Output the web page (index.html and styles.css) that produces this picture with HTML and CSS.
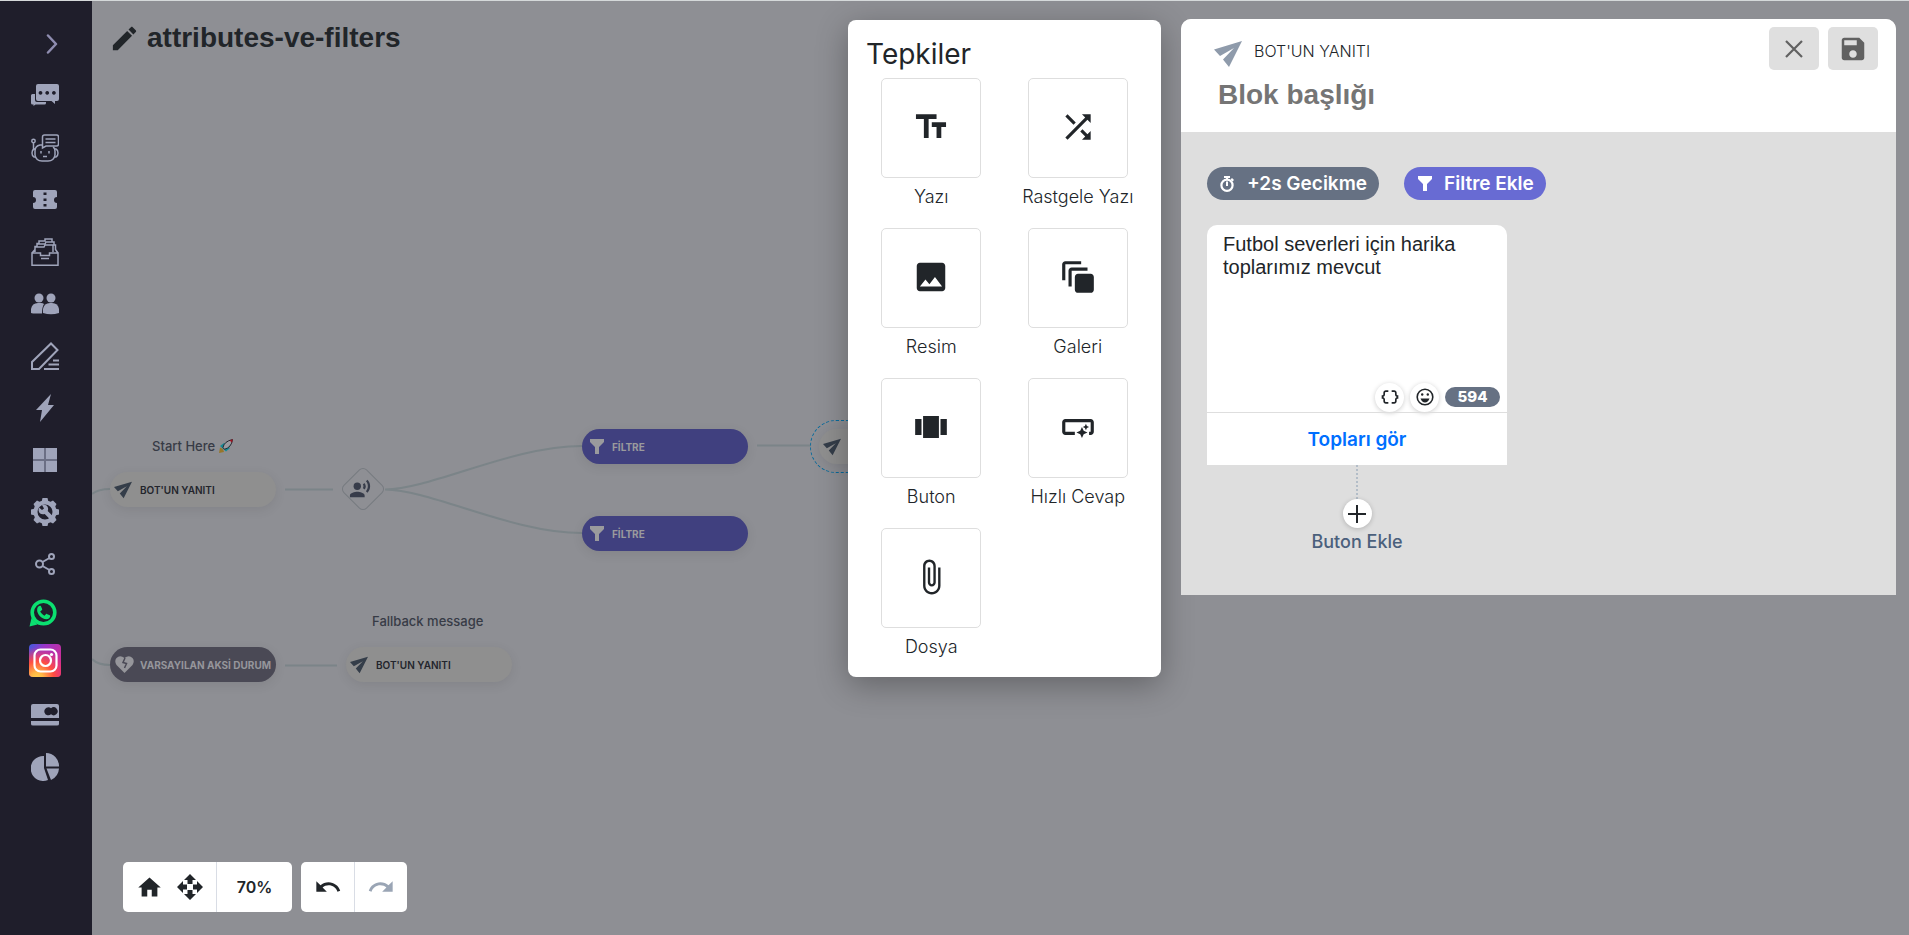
FILE: index.html
```
<!DOCTYPE html>
<html lang="tr">
	<head>
		<meta charset="UTF-8" />
		<meta name="viewport" content="width=device-width, initial-scale=1" />
		<title>attributes-ve-filters</title>
		<link rel="stylesheet" href="styles.css">
	</head>
	<body>
		<!-- shared icons -->
		<svg class="sprite" aria-hidden="true">
			<symbol id="plane" viewBox="0 0 28 26">
				<path d="M0 8.500L28 0 15 26 9 18.500 20 7 6 15z" />
			</symbol>
			<symbol id="funnel" viewBox="0 0 14 15">
				<path d="M0 0h14v3L9 8v7H5V8L0 3z" />
			</symbol>
		</svg>

		<nav class="sidebar" aria-label="Menü">
			<a href="#" class="toggle" aria-label="Genişlet">
				<svg width="12" height="20" viewBox="0 0 12 20"><path d="M2 1.500l8 8.500-8 8.500" fill="none" stroke="#8f8db0" stroke-width="2.500" stroke-linecap="round" stroke-linejoin="round" /></svg>
			</a>
			<a href="#" aria-label="Sohbetler">
				<svg width="28" height="28" viewBox="0 0 28 28">
					<path d="M0 13.500q0-1.500 1.500-1.500H4v6q0 2 2 2h9v1q0 1.500-1.500 1.500H4.500L2.500 24v-1.500H1.500Q0 22.500 0 21z" />
					<path fill-rule="evenodd" d="M7 2h19q2 0 2 2v13q0 2-2 2h-2v3l-3.500-3H7q-2 0-2-2V4q0-2 2-2zm2.500 7a1.900 1.900 0 1 0 .01 0zm6.700 0a1.900 1.900 0 1 0 .01 0zm6.700 0a1.900 1.900 0 1 0 .01 0z" />
				</svg>
			</a>
			<a href="#" aria-label="Botlar">
				<svg class="line" width="28" height="28" viewBox="0 0 28 28" stroke-width="1.500">
					<circle cx="2.500" cy="7" r="1.700" />
					<path d="M2.500 9v7M11 11H9q-5 1-5 6v4q1 6 7 6h6q6 0 7-6v-4q0-3-2-4" />
					<path d="M4 15H3q-2 1-2 4t2 4h2M24 15h1q2 1 2 4t-2 4h-2M11.500 14V3q0-2 2-2h12q2 0 2 2v7q0 2-2 2H15zM14.500 5h10M14.500 8.500h10M10 17v2.500M18 17v2.500M12 22.500h4" />
				</svg>
			</a>
			<a href="#" aria-label="Biletler">
				<svg width="24" height="20" viewBox="0 0 24 20">
					<path fill-rule="evenodd" d="M2 0h20q2 0 2 2v5a3 3 0 0 0 0 6v4q0 2-2 2H2q-2 0-2-2v-4a3 3 0 0 0 0-6V2q0-2 2-2zm8.500 2.500V5h3V2.500zm0 6V11h3V8.500zm0 5.500v2.500h3V14z" />
				</svg>
			</a>
			<a href="#" aria-label="Arşiv">
				<svg class="line" width="28" height="28" viewBox="0 0 28 28" stroke-width="1.500">
					<path d="M1 15h8.500v2.500h9V15H27v12.200H1zM1 15l3-3.500V8.500h2V5.500h2V3h6V1h7v3h2v3h1.500v4.500L27 15M4 14V9h9l1-2h8v7M6 6h8l1-2h6M10 20.500h8" />
				</svg>
			</a>
			<a href="#" aria-label="Kişiler">
				<svg width="28" height="22" viewBox="0 0 28 22">
					<circle cx="8" cy="5" r="4.500" /><circle cx="20" cy="5" r="4.500" />
					<path d="M0 20v-4q1-6 7-6h3q2 0 3 1-2 3-2 9.500H2z" />
					<path d="M12 20v-4q1-6 7-6h2q6 0 7 6v4q-8 2.500-16 0z" />
				</svg>
			</a>
			<a href="#" aria-label="Düzenle">
				<svg class="line" width="28" height="28" viewBox="0 0 28 28" stroke-width="2">
					<path d="M1 27v-7L20 1.500 26.500 8 8 27zM22 18.500h6M17.500 22.500H28M13 27h15" />
				</svg>
			</a>
			<a href="#" aria-label="Otomasyon">
				<svg width="18" height="28" viewBox="0 0 18 28"><path d="M15 0L0 16h6L4 28 18 11h-6z" /></svg>
			</a>
			<a href="#" aria-label="Uygulamalar">
				<svg width="24" height="24" viewBox="0 0 24 24"><path fill="#6b6f85" d="M0 0h24v24H0z" /><path d="M0 0h11v11H0zM13 0h11v11H13zM0 13h11v11H0zM13 13h11v11H13z" /></svg>
			</a>
			<a href="#" aria-label="Ayarlar">
				<svg width="28" height="28" viewBox="0 0 28 28">
					<circle cx="14" cy="14" r="9.500" fill="none" stroke="#9fa4ba" stroke-width="4" />
					<path d="M11.500 0h5l1 4h-7zM11.500 28h5l1-4h-7zM0 11.500v5l4 1v-7zM28 11.500v5l-4 1v-7zM2.500 6l3.500-3.500 4 2L4.500 10zM25.500 6L22 2.500l-4 2 5.500 5.500zM2.500 22L6 25.500l4-2L4.500 18zM25.500 22L22 25.500l-4-2 5.500-5.500z" />
					<path d="M8 9.500l3 2.500 2-1.500-2-3.500q5-1 6 3 .3 1.500-.3 3l5 5-3 3-5-5q-5 1-6-3-.3-2 .300-3.500z" />
				</svg>
			</a>
			<a href="#" aria-label="Paylaş">
				<svg class="line" width="20" height="22" viewBox="0 0 20 22" stroke-width="2">
					<circle cx="4.500" cy="11" r="3.500" /><circle cx="16.500" cy="3.500" r="2.500" /><circle cx="16.500" cy="18.500" r="2.500" />
					<path d="M7.500 9l7-4M7.500 13l7 4" />
				</svg>
			</a>
			<a href="#" class="whatsapp" aria-label="WhatsApp">
				<svg width="28" height="28" viewBox="0 0 28 28">
					<circle cx="14.500" cy="13.500" r="11.300" fill="none" stroke="#0be070" stroke-width="3.600" />
					<path fill="#0be070" d="M.5 27.500l2-8.500 6 6.500z" />
					<path fill="#0be070" transform="translate(5.500 4.500) scale(.75)" d="M7.600 10.800c1.400 2.500 3 4 5.600 5.600l2-2.200c.4-.4.8-.5 1.200-.3l4 1.900c.5.300.7.700.6 1.200-.5 2.500-2.500 4-5 4C9 20.500 3 14 3.500 8c.2-2.500 1.500-4.500 3.500-5 .6-.1 1.300-.1 1.600.5l1.600 3.800c.2.500.1.900-.2 1.200z" />
				</svg>
			</a>
			<a href="#" class="instagram" aria-label="Instagram">
				<svg width="32" height="33" viewBox="0 0 32 33">
					<defs>
						<linearGradient id="ig-sky" x1="0" y1="0" x2="1" y2="0.700">
							<stop offset="0" stop-color="#3b5de0" /><stop offset=".35" stop-color="#9a35c8" /><stop offset="1" stop-color="#d82c8c" />
						</linearGradient>
						<radialGradient id="ig-sun" cx=".25" cy="1.050" r=".95">
							<stop offset="0" stop-color="#ffd34e" /><stop offset=".2" stop-color="#ffb946" /><stop offset=".55" stop-color="#ff4f3f" /><stop offset="1" stop-color="#ff3f60" stop-opacity="0" />
						</radialGradient>
					</defs>
					<rect width="32" height="33" rx="4" fill="url(#ig-sky)" /><rect width="32" height="33" rx="4" fill="url(#ig-sun)" />
					<g fill="none" stroke="#fff" stroke-width="2.200"><rect x="5.500" y="5.500" width="22" height="22" rx="6" /><circle cx="16.500" cy="16.500" r="5.500" /></g>
					<circle cx="22.500" cy="10.500" r="1.600" fill="#fff" />
				</svg>
			</a>
			<a href="#" aria-label="Ödemeler">
				<svg width="28" height="22" viewBox="0 0 28 22">
					<path fill-rule="evenodd" d="M2 0h24q2 0 2 2v12H0V2Q0 0 2 0zm15.500 3.300a4 4 0 1 0 2.500 7 4 4 0 1 0 0-6.100 4 4 0 0 0-2.500-.9z" />
					<path d="M0 17h28v3q0 1.500-2 1.500H2q-2 0-2-1.500z" />
				</svg>
			</a>
			<a href="#" aria-label="Raporlar">
				<svg width="28" height="28" viewBox="0 0 28 28">
					<path d="M13 3v12l4 12A12.500 12.500 0 1 1 13 3zM15 0a13 13 0 0 1 13 13.500H15zM15.500 15.500H28q-.5 8-8 11.500z" />
				</svg>
			</a>
		</nav>

		<main class="canvas">
			<header class="flow-title">
				<svg width="31" height="31" viewBox="0 0 24 24"><path d="M3 17.250V21h3.750L17.810 9.940l-3.750-3.750L3 17.250zM20.710 7.040c.39-.39.39-1.020 0-1.410l-2.340-2.340c-.39-.39-1.020-.39-1.410 0l-1.830 1.830 3.750 3.750 1.830-1.830z" /></svg>
				<h1>attributes-ve-filters</h1>
			</header>

			<!-- flow diagram -->
			<section class="flow">
				<svg class="edges" width="900" height="700">
					<path d="M0 493q6-5 18-5M0 658q6 6 18 6M193 488.500h48M193 664.500h52M293 488.500C340 488 420 445 490 445M293 488.500C340 489 420 532 490 532M665 444.500h54" />
				</svg>

				<p class="caption at-start-caption">Start Here
					<svg width="14" height="14" viewBox="0 0 14 14">
						<path fill="#96762a" d="M1 8.500L4 10l1 3-5 1z" />
						<path fill="#128a94" d="M1 7l4-3 6 5-4 3.500z" />
						<path fill="#9b9ba0" stroke="#252a33" d="M4 8.500q1-6 9.500-8-1 8-8 9.800z" />
						<path fill="#9c1522" d="M10.500 1.200L13.800.2 13 3.700z" />
					</svg>
				</p>
				<div class="node bot at-start"><svg class="plane"><use href="#plane" /></svg>BOT'UN YANITI</div>
				<div class="split at-split">
					<svg width="44" height="44" viewBox="0 0 44 44">
						<rect x="6" y="6" width="32" height="32" rx="5" transform="rotate(45 22 22)" fill="none" stroke="#777b80" />
						<g transform="translate(8 11) scale(.92)" fill="#373c4a">
							<circle cx="9" cy="9" r="4" />
							<path d="M9 15c-2.670 0-8 1.340-8 4v2h16v-2c0-2.660-5.330-4-8-4zm7.760-9.640l-1.680 1.690c.84 1.180.84 2.710 0 3.890l1.680 1.690c2.020-2.020 2.020-5.070 0-7.270zM20.070 2l-1.630 1.630c2.770 3.020 2.770 7.560 0 10.740L20.070 16c3.900-3.890 3.910-9.950 0-14z" />
						</g>
					</svg>
				</div>
				<div class="node filter at-filter-top"><svg class="funnel"><use href="#funnel" /></svg>FİLTRE</div>
				<div class="node filter at-filter-bottom"><svg class="funnel"><use href="#funnel" /></svg>FİLTRE</div>
				<div class="selected at-selected">
					<div class="node bot"><svg class="plane"><use href="#plane" /></svg>BOT'UN YANITI</div>
				</div>
				<div class="node fallback at-fallback">
					<svg width="19" height="17" viewBox="0 0 19 17"><path d="M9.500 17L1.500 9Q-1 5 1.500 2 5-1.500 9.500 2 14-1.500 17.500 2 20 5 17.500 9z" /><path d="M10 2L8 6.500l3.500 1L9.500 12" fill="none" stroke="#4a4955" stroke-width="1.500" /></svg>
					VARSAYILAN AKSİ DURUM
				</div>
				<p class="caption at-fallback-caption">Fallback message</p>
				<div class="node bot at-fallback-bot"><svg class="plane"><use href="#plane" /></svg>BOT'UN YANITI</div>
			</section>

			<div class="toolbar">
				<div class="tool-group">
					<div class="tool-pair">
						<button type="button" aria-label="Başlangıç"><svg width="27" height="27" viewBox="0 0 24 24"><path d="M10 20v-6h4v6h5v-8h3L12 3 2 12h3v8z" /></svg></button>
						<button type="button" aria-label="Sığdır"><svg width="26" height="26" viewBox="0 0 26 26"><path d="M13 0l6 6h-3.500v4h-5V6H7zM13 26l6-6h-3.500v-4h-5v4H7zM0 13l6-6v3.500h4v5H6V19zM26 13l-6-6v3.500h-4v5h4V19z" /></svg></button>
					</div>
					<button type="button" class="zoom">70%</button>
				</div>
				<div class="tool-group">
					<button type="button" class="history" aria-label="Geri al"><svg width="28" height="28" viewBox="0 0 24 24"><path d="M12.500 8c-2.650 0-5.050.99-6.900 2.600L2 7v9h9l-3.620-3.620c1.390-1.160 3.160-1.880 5.120-1.880 3.540 0 6.550 2.310 7.600 5.500l2.370-.78C21.080 11.030 17.150 8 12.500 8z" /></svg></button>
					<button type="button" class="history" aria-label="Yinele" disabled><svg width="28" height="28" viewBox="0 0 24 24"><path d="M18.400 10.600C16.550 8.990 14.150 8 11.500 8c-4.650 0-8.580 3.030-9.960 7.220L3.900 16c1.050-3.190 4.050-5.500 7.600-5.500 1.950 0 3.730.72 5.120 1.880L13 16h9V7l-3.600 3.600z" /></svg></button>
				</div>
			</div>

			<div class="overlay">
				<section class="responses">
					<h2>Tepkiler</h2>
					<div class="response-grid">
						<button type="button"><span><svg viewBox="0 0 24 24"><path d="M2.500 4v3h5v12h3V7h5V4h-13zm19 5h-9v3h3v7h3v-7h3V9z" /></svg></span>Yazı</button>
						<button type="button"><span><svg viewBox="0 0 24 24"><path d="M10.590 9.170L5.410 4 4 5.410l5.170 5.170 1.420-1.410zM14.500 4l2.040 2.040L4 18.590 5.410 20 17.960 7.460 20 9.500V4h-5.500zm.33 9.410l-1.410 1.410 3.130 3.130L14.500 20H20v-5.500l-2.040 2.040-3.130-3.130z" /></svg></span>Rastgele Yazı</button>
						<button type="button"><span><svg viewBox="0 0 24 24"><path d="M21 19V5c0-1.100-.9-2-2-2H5c-1.100 0-2 .9-2 2v14c0 1.100.9 2 2 2h14c1.100 0 2-.9 2-2zM8.500 13.500l2.500 3.010L14.500 12l4.500 6H5l3.500-4.500z" /></svg></span>Resim</button>
						<button type="button"><span><svg viewBox="0 0 24 24"><path d="M14 2H4c-1.100 0-2 .9-2 2v10h2V4h10V2zm4 4H8c-1.100 0-2 .9-2 2v10h2V8h10V6zm2 4h-8c-1.100 0-2 .9-2 2v8c0 1.100.9 2 2 2h8c1.100 0 2-.9 2-2v-8c0-1.100-.9-2-2-2z" /></svg></span>Galeri</button>
						<button type="button"><span><svg viewBox="0 0 24 24"><path d="M7 19h10V5H7v14zm-5-2h4V7H2v10zM18 7v10h4V7h-4z" /></svg></span>Buton</button>
						<button type="button"><span><svg viewBox="0 0 24 24"><path d="M22 9v6c0 1.100-.9 2-2 2h-1v-2h1V9H4v6h6v2H4c-1.100 0-2-.9-2-2V9c0-1.100.9-2 2-2h16c1.100 0 2 .9 2 2zm-7.500 10l1.090-2.410L18 15.500l-2.410-1.090L14.500 12l-1.090 2.410L11 15.500l2.410 1.090L14.500 19zm2.500-5l.62-1.380L19 12l-1.380-.62L17 10l-.62 1.380L15 12l1.380.62L17 14z" /></svg></span>Hızlı Cevap</button>
						<button type="button"><span><svg viewBox="0 0 24 24"><path d="M16.500 6v11.500c0 2.210-1.790 4-4 4s-4-1.790-4-4V5c0-1.380 1.120-2.500 2.500-2.500s2.500 1.120 2.500 2.500v10.500c0 .55-.45 1-1 1s-1-.45-1-1V6H10v9.500c0 1.380 1.120 2.500 2.500 2.500s2.500-1.120 2.500-2.500V5c0-2.210-1.790-4-4-4S7 2.790 7 5v12.500c0 3.040 2.460 5.500 5.500 5.500s5.500-2.460 5.500-5.500V6h-1.500z" /></svg></span>Dosya</button>
					</div>
				</section>

				<section class="block">
					<header class="block-head">
						<div class="block-info">
							<div class="block-type"><svg width="28" height="26"><use href="#plane" /></svg>BOT'UN YANITI</div>
							<input type="text" class="block-title" placeholder="Blok başlığı" aria-label="Blok başlığı" />
						</div>
						<div class="block-actions">
							<button type="button" aria-label="Kapat"><svg width="18" height="18" viewBox="0 0 18 18"><path d="M1 1l16 16M17 1L1 17" fill="none" stroke="#616161" stroke-width="2.200" /></svg></button>
							<button type="button" aria-label="Kaydet"><svg width="30" height="30" viewBox="0 0 24 24"><path fill="#616161" d="M17 3H5c-1.110 0-2 .9-2 2v14c0 1.100.89 2 2 2h14c1.100 0 2-.9 2-2V7l-4-4zm-5 16c-1.660 0-3-1.340-3-3s1.340-3 3-3 3 1.340 3 3-1.340 3-3 3zm3-10H5V5h10v4z" /></svg></button>
						</div>
					</header>
					<div class="block-body">
						<div class="pills">
							<button type="button" class="pill"><svg width="16" height="16" viewBox="0 0 16 16"><circle cx="8" cy="9.200" r="5.600" fill="none" stroke="#fff" stroke-width="2.200" /><path d="M5 0h6v2H9v2H7V2H5zM7 5.500h2V10H7zM13 2l2 2-1.500 1.500-2-2z" /></svg>+2s Gecikme</button>
							<button type="button" class="pill pill-filter"><svg width="14" height="15"><use href="#funnel" /></svg>Filtre Ekle</button>
						</div>

						<div class="message">
							<textarea aria-label="Mesaj" spellcheck="false">Futbol severleri için harika toplarımız mevcut</textarea>
							<div class="message-tools">
								<button type="button" class="round" aria-label="Değişken"><svg width="20" height="20" viewBox="0 0 24 24"><path d="M4 7v2c0 .55-.45 1-1 1H2v4h1c.55 0 1 .45 1 1v2c0 1.650 1.350 3 3 3h3v-2H7c-.55 0-1-.45-1-1v-2c0-1.300-.84-2.420-2-2.830v-.34C5.160 11.420 6 10.300 6 9V7c0-.55.45-1 1-1h3V4H7C5.350 4 4 5.350 4 7zM21 10c-.55 0-1-.45-1-1V7c0-1.650-1.350-3-3-3h-3v2h3c.55 0 1 .45 1 1v2c0 1.300.84 2.420 2 2.830v.34c-1.160.41-2 1.520-2 2.830v2c0 .55-.45 1-1 1h-3v2h3c1.650 0 3-1.350 3-3v-2c0-.55.45-1 1-1h1v-4h-1z" /></svg></button>
								<button type="button" class="round" aria-label="Emoji"><svg width="18" height="18" viewBox="0 0 18 18"><circle cx="9" cy="9" r="7.800" fill="none" stroke="#212529" stroke-width="1.600" /><circle cx="6.200" cy="6.500" r="1.200" /><circle cx="11.800" cy="6.500" r="1.200" /><path d="M4.500 10.500h9Q12 14.500 9 14.500t-4.500-4z" /></svg></button>
								<span class="count">594</span>
							</div>
							<button type="button" class="message-button">Topları gör</button>
						</div>

						<div class="add-button">
							<button type="button">
								<span class="plus"><svg width="18" height="18" viewBox="0 0 18 18"><path d="M8 0h2v8h8v2h-8v8H8v-8H0V8h8z" /></svg></span>
								Buton Ekle
							</button>
						</div>
					</div>
				</section>
			</div>
		</main>
	</body>
</html>
```

FILE: styles.css
```
* {
	box-sizing: border-box;
	margin: 0;
	padding: 0;
}

body {
	display: flex;
	min-height: 100vh;
	border-top: 1px solid #d5d9da;
	font-family: Inter, sans-serif;
	font-size: 16px;
	color: #212529;
	background-color: #8e8f94;
}

button {
	border: none;
	background: none;
	font-family: inherit;
	color: inherit;
	cursor: pointer;
}

svg {
	display: block;
	flex-shrink: 0;
	fill: currentColor;
}

.sprite {
	position: absolute;
	width: 0;
	height: 0;
}

/* sidebar */
.sidebar {
	flex: 0 0 92px;
	display: flex;
	flex-direction: column;
	padding: 17px 2px 0 0;
	background-color: #1f1e2b;
	color: #9fa4ba;
}

.sidebar a {
	display: flex;
	align-items: center;
	justify-content: center;
	height: 52px;
	color: inherit;
}

.sidebar .toggle {
	padding-left: 14px;
}

.sidebar .whatsapp {
	height: 45px;
	padding-right: 4px;
}

.sidebar .instagram {
	height: 50px;
	margin-bottom: 4px;
}

.line {
	fill: none;
	stroke: currentColor;
}

/* canvas */
.canvas {
	position: relative;
	flex: 1;
	min-width: 0;
	overflow: hidden;
}

.flow-title {
	display: flex;
	align-items: center;
	gap: 7px;
	padding: 21px 17px;
}

.flow-title h1 {
	font-family: "Liberation Sans", Arial, sans-serif;
	font-size: 28px;
	line-height: 32px;
}

.flow,
.edges {
	position: absolute;
	top: 0;
	left: 0;
}

.edges path {
	fill: none;
	stroke: #7b8488;
	stroke-width: 2;
}

.node {
	display: flex;
	align-items: center;
	width: 166px;
	height: 35px;
	border-radius: 18px;
	font-size: 10px;
	font-weight: 700;
	white-space: nowrap;
	box-shadow: 0 3px 12px rgba(0, 0, 0, 0.08);
}

.node.bot {
	gap: 8px;
	padding: 0 4px;
	background-color: #8f8f8f;
	color: #23252c;
	font-weight: 600;
}

.node.filter {
	gap: 8px;
	padding: 0 8px;
	background-color: #40407f;
	color: #9a9a9d;
}

.node.fallback {
	gap: 6px;
	padding: 0 5px;
	background-color: #4a4955;
	color: #96969b;
}

.node .plane {
	width: 18px;
	height: 18px;
	color: #343d49;
}

.node .funnel {
	width: 14px;
	height: 15px;
}

.selected {
	width: 184px;
	padding: 8px;
	border: 1px dashed #086b9d;
	border-radius: 26px;
}

.caption {
	display: flex;
	gap: 4px;
	align-items: center;
	font-size: 13px;
	font-weight: 500;
	line-height: 18px;
	color: #373b46;
	white-space: nowrap;
}

/* places of the nodes on the free canvas */
.at-start,
.at-start-caption,
.at-split,
.at-filter-top,
.at-filter-bottom,
.at-selected,
.at-fallback,
.at-fallback-caption,
.at-fallback-bot {
	position: absolute;
}

.at-start { left: 18px; top: 471px; }
.at-start-caption { left: 60px; top: 436px; }
.at-split { left: 249px; top: 466px; }
.at-filter-top { left: 490px; top: 428px; }
.at-filter-bottom { left: 490px; top: 515px; }
.at-selected { left: 718px; top: 419px; }
.at-fallback { left: 18px; top: 646px; }
.at-fallback-caption { left: 280px; top: 611px; }
.at-fallback-bot { left: 254px; top: 646px; }

/* bottom toolbar */
.toolbar {
	position: absolute;
	left: 31px;
	bottom: 23px;
	display: flex;
	gap: 9px;
}

.tool-group {
	display: flex;
	height: 50px;
	border-radius: 5px;
	background-color: #fff;
}

.tool-pair {
	display: flex;
	align-items: center;
	gap: 14px;
	padding: 0 13px;
}

.tool-group > * + * {
	border-left: 1px solid #d9dde5;
}

.zoom {
	width: 76px;
	font-size: 16px;
	font-weight: 600;
}

.history {
	display: grid;
	place-items: center;
	width: 53px;
}

.history:disabled {
	color: #9aa5b5;
	cursor: default;
}

/* open dialogs */
.overlay {
	position: absolute;
	top: 18px;
	right: 13px;
	width: calc(100% - 756px - 13px);
	min-width: 880px;
	display: flex;
	align-items: flex-start;
	gap: 20px;
}

.responses {
	flex: 0 0 313px;
	margin-top: 1px;
	padding: 16px 10px 11px;
	border-radius: 8px;
	background-color: #fff;
	box-shadow: 0 8px 32px rgba(0, 0, 0, 0.3);
}

.responses h2 {
	padding: 0 8px;
	font-size: 28px;
	font-weight: 400;
	line-height: 36px;
	margin-bottom: 6px;
}

.response-grid {
	display: grid;
	grid-template-columns: 1fr 1fr;
	gap: 12px 0;
}

.response-grid button {
	display: flex;
	flex-direction: column;
	align-items: center;
	gap: 6px;
	height: 138px;
	font-size: 18px;
	font-weight: 300;
	line-height: 26px;
	white-space: nowrap;
}

.response-grid span {
	display: grid;
	place-items: center;
	width: 100px;
	height: 100px;
	padding-bottom: 2px;
	border: 1px solid #dedede;
	border-radius: 5px;
}

.response-grid svg {
	width: 38px;
	height: 38px;
}

.block {
	flex: 1;
	border-radius: 10px 10px 0 0;
	overflow: hidden;
	background-color: #dedede;
}

.block-head {
	display: flex;
	justify-content: space-between;
	height: 113px;
	padding: 8px 18px 0 33px;
	background-color: #fff;
}

.block-type {
	display: flex;
	align-items: center;
	gap: 12px;
	height: 48px;
	font-size: 16px;
	font-weight: 300;
}

.block-type svg {
	margin-top: 6px;
	color: #8f9bab;
}

.block-title {
	width: 100%;
	padding: 0 4px;
	border: none;
	outline: none;
	font-family: "Liberation Sans", Arial, sans-serif;
	font-size: 28px;
	font-weight: 700;
	line-height: 36px;
	height: 40px;
}

.block-title::placeholder {
	color: #757575;
}

.block-actions {
	display: flex;
	gap: 9px;
}

.block-actions button {
	display: grid;
	place-items: center;
	width: 50px;
	height: 43px;
	border-radius: 5px;
	background-color: #dfdfdf;
}

.block-body {
	padding: 35px 26px 40px;
}

.pills {
	display: flex;
	gap: 25px;
	margin-bottom: 25px;
}

.pill {
	display: flex;
	align-items: center;
	gap: 12px;
	height: 33px;
	padding: 0 12px;
	border-radius: 17px;
	background-color: #667183;
	color: #fff;
	font-size: 19px;
	font-weight: 600;
}

.pill-filter {
	padding-left: 14px;
	background-color: #686bd3;
}

.message {
	width: 300px;
	border-radius: 10px 10px 0 0;
	background-color: #fff;
}

.message textarea {
	display: block;
	width: 100%;
	height: 157px;
	padding: 8px 16px;
	border: none;
	outline: none;
	resize: none;
	background: none;
	font-family: "Liberation Sans", Arial, sans-serif;
	font-size: 20px;
	line-height: 23px;
	color: #212529;
}

.message-tools {
	display: flex;
	align-items: center;
	justify-content: flex-end;
	gap: 6px;
	height: 30px;
	padding-right: 7px;
}

.round,
.plus {
	display: grid;
	place-items: center;
	width: 29px;
	height: 29px;
	border-radius: 50%;
	background-color: #fff;
	box-shadow: 0 1px 5px rgba(0, 0, 0, 0.2);
}

.count {
	width: 55px;
	border-radius: 10px;
	background-color: #667183;
	color: #fff;
	font-size: 15px;
	font-weight: 800;
	line-height: 20px;
	text-align: center;
}

.message-button {
	width: 100%;
	height: 53px;
	border-top: 1px solid #dedede;
	color: #006fff;
	font-size: 19px;
	font-weight: 600;
}

.add-button {
	display: flex;
	flex-direction: column;
	align-items: center;
	width: 300px;
}

.add-button::before {
	content: "";
	height: 34px;
	border-left: 2px dotted #b3bdc8;
}

.add-button button {
	display: flex;
	flex-direction: column;
	align-items: center;
	gap: 1px;
	font-size: 18px;
	font-weight: 500;
	line-height: 26px;
	color: #4b607c;
}

.plus {
	color: #212529;
}
```
